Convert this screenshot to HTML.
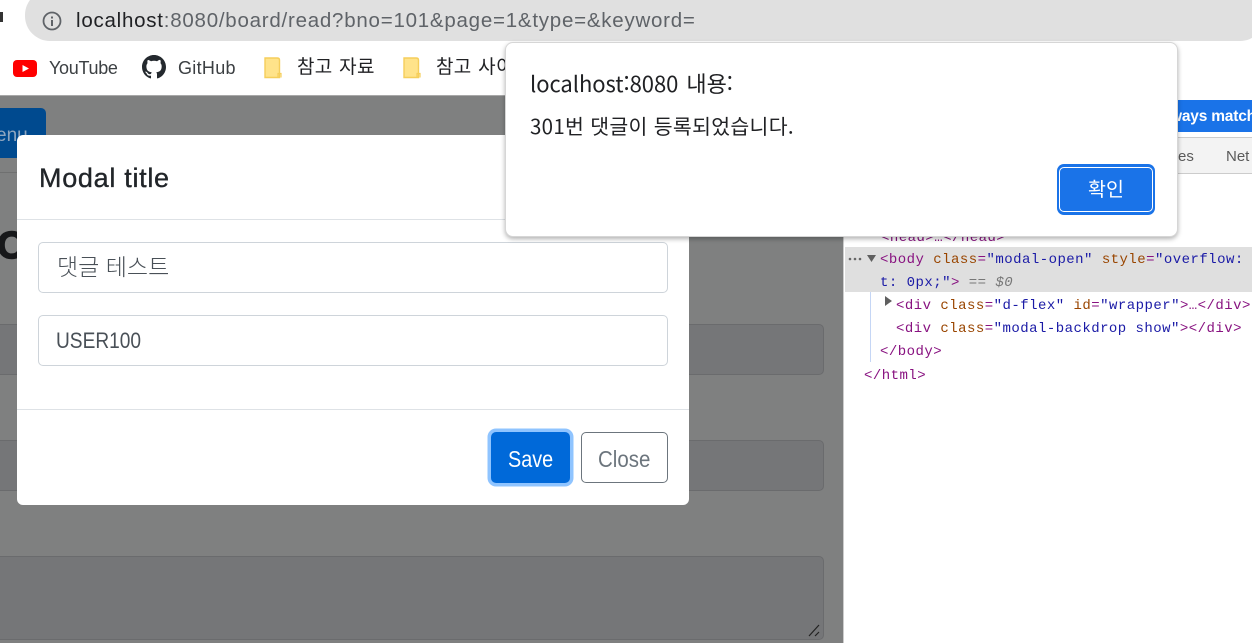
<!DOCTYPE html>
<html lang="ko">
<head>
<meta charset="utf-8">
<title>Modal</title>
<style>
html,body{margin:0;padding:0;width:1252px;height:643px;overflow:hidden;background:#fff}
body{position:relative;font-family:"Liberation Sans","Noto Sans CJK KR",sans-serif;}
.a{position:absolute;box-sizing:border-box}
.t{position:absolute;white-space:pre;line-height:1}
.k{font-family:"Noto Sans CJK KR","Liberation Sans",sans-serif;font-weight:300}
.m{font-family:"Liberation Mono","DejaVu Sans Mono",monospace;font-size:14px;letter-spacing:.47px}
.tag{color:#881280}.an{color:#994500}.av{color:#1a1aa6}
</style>
</head>
<body>
<!-- backdrop -->
<div class="a" style="left:0;top:95px;width:843px;height:548px;background:#7f8080;border-top:1px solid #a8a8a8"></div>
<div class="a" style="left:0;top:108px;width:46px;height:50px;background:#004a8f;border-radius:0 5px 5px 0"></div>
<div class="t" style="left:-4px;top:126px;font-size:19px;color:#8fa6bf">enu</div>
<div class="a" style="left:0;top:172px;width:17px;height:1px;background:#6f7070"></div>
<div class="t" style="left:-3px;top:227px;font-size:38px;font-weight:bold;color:#17181a;-webkit-text-stroke:1.5px #17181a">O</div>
<div class="a" style="left:-6px;top:324px;width:830px;height:51px;background:#757678;border:1px solid #6a6b6d;border-radius:5px"></div>
<div class="a" style="left:-6px;top:440px;width:830px;height:51px;background:#757678;border:1px solid #6a6b6d;border-radius:5px"></div>
<div class="a" style="left:-6px;top:556px;width:830px;height:84px;background:#757678;border:1px solid #6a6b6d;border-radius:5px"></div>
<svg class="a" style="left:806px;top:622px" width="18" height="16"><path d="M3 14 L13 3 M9 14 L13 10" stroke="#222" stroke-width="1.2" fill="none"/></svg>

<!-- modal -->
<div class="a" style="left:17px;top:135px;width:672px;height:370px;background:#fff;border-radius:6px"></div>
<div class="t" style="left:39px;top:165px;font-size:27px;color:#212529;letter-spacing:.7px;-webkit-text-stroke:.35px #212529">Modal title</div>
<div class="a" style="left:17px;top:219px;width:672px;height:1px;background:#dee2e6"></div>
<div class="a" style="left:38px;top:242px;width:630px;height:51px;border:1px solid #ced4da;border-radius:5px"></div>
<div class="t k" style="left:57px;top:254px;font-size:23px;color:#495057">댓글 테스트</div>
<div class="a" style="left:38px;top:315px;width:630px;height:51px;border:1px solid #ced4da;border-radius:5px"></div>
<div class="t" style="left:56px;top:330px;font-size:22.5px;color:#495057;transform:scaleX(.85);transform-origin:left">USER100</div>
<div class="a" style="left:17px;top:409px;width:672px;height:1px;background:#dee2e6"></div>
<div class="a" style="left:491px;top:432px;width:79px;height:51px;background:#0069d9;border-radius:5px;box-shadow:0 0 0 3.5px #8fc4ff"></div>
<div class="t" style="left:508px;top:448px;font-size:23px;color:#fff;transform:scaleX(.86);transform-origin:left">Save</div>
<div class="a" style="left:581px;top:432px;width:87px;height:51px;border:1px solid #6c757d;border-radius:5px;background:#fff"></div>
<div class="t" style="left:598px;top:448px;font-size:23px;color:#6c757d;transform:scaleX(.89);transform-origin:left">Close</div>

<!-- devtools -->
<div class="a" style="left:843px;top:96px;width:409px;height:547px;background:#fff;border-left:1px solid #ccc"></div>
<div class="a" style="left:1170px;top:100px;width:82px;height:32px;background:#1a73e8"></div>
<div class="t" style="left:1170px;top:109px;font-size:15.5px;font-weight:bold;color:#fff;letter-spacing:-.2px">ways match</div>
<div class="a" style="left:844px;top:137px;width:408px;height:37px;background:#f3f3f3;border-top:1px solid #ccc;border-bottom:1px solid #ccc"></div>
<div class="t" style="left:1178px;top:149px;font-size:15px;color:#5a5a5a">es</div>
<div class="t" style="left:1226px;top:149px;font-size:15px;color:#5a5a5a">Net</div>
<div class="t m" style="left:881px;top:231px"><span class="tag">&lt;head&gt;…&lt;/head&gt;</span></div>
<div class="a" style="left:845px;top:247px;width:407px;height:45px;background:#dfdfdf"></div>
<svg class="a" style="left:848px;top:255px" width="32" height="12"><g fill="#666"><circle cx="2" cy="4" r="1.3"/><circle cx="7" cy="4" r="1.3"/><circle cx="12" cy="4" r="1.3"/></g><path d="M19 0 H28 L23.5 7 Z" fill="#5f5f5f"/></svg>
<div class="t m" style="left:880px;top:253px"><span class="tag">&lt;body</span> <span class="an">class</span><span class="tag">=</span><span class="av">"modal-open"</span> <span class="an">style</span><span class="tag">=</span><span class="av">"overflow:</span></div>
<div class="t m" style="left:880px;top:276px"><span class="av">t: 0px;"</span><span class="tag">&gt;</span> <span style="color:#777">==</span> <i style="color:#777">$0</i></div>
<div class="a" style="left:870px;top:292px;width:1px;height:70px;background:#c5d6f5"></div>
<svg class="a" style="left:885px;top:296px" width="8" height="11"><path d="M0 0 L7 5 L0 10 Z" fill="#5f5f5f"/></svg>
<div class="t m" style="left:896px;top:299px"><span class="tag">&lt;div</span> <span class="an">class</span><span class="tag">=</span><span class="av">"d-flex"</span> <span class="an">id</span><span class="tag">=</span><span class="av">"wrapper"</span><span class="tag">&gt;…&lt;/div&gt;</span></div>
<div class="t m" style="left:896px;top:322px"><span class="tag">&lt;div</span> <span class="an">class</span><span class="tag">=</span><span class="av">"modal-backdrop show"</span><span class="tag">&gt;&lt;/div&gt;</span></div>
<div class="t m" style="left:880px;top:345px"><span class="tag">&lt;/body&gt;</span></div>
<div class="t m" style="left:864px;top:369px"><span class="tag">&lt;/html&gt;</span></div>

<!-- browser chrome -->
<div class="a" style="left:0;top:0;width:1252px;height:41px;background:#fff"></div>
<div class="a" style="left:25px;top:-10px;width:1240px;height:51px;background:#e0e0e0;border-radius:25px"></div>
<div class="a" style="left:0;top:12px;width:3px;height:10px;background:#333"></div>
<svg class="a" style="left:42px;top:11px" width="20" height="20" viewBox="0 0 20 20"><circle cx="10" cy="10" r="8.5" fill="none" stroke="#5f6368" stroke-width="1.8"/><rect x="9" y="9" width="2" height="6" fill="#5f6368"/><rect x="9" y="5.5" width="2" height="2" fill="#5f6368"/></svg>
<div class="t" style="left:76px;top:11px;font-size:20.5px;color:#5f6368;letter-spacing:.76px"><span style="color:#202124">localhost</span>:8080/board/read?bno=101&amp;page=1&amp;type=&amp;keyword=</div>

<!-- bookmarks -->
<svg class="a" style="left:13px;top:60px" width="24" height="17" viewBox="0 0 24 17"><rect width="24" height="17" rx="4" fill="#f00"/><path d="M9.5 5 L16 8.5 L9.5 12 Z" fill="#fff"/></svg>
<div class="t" style="left:49px;top:59px;font-size:18px;color:#3c4043;letter-spacing:-.3px">YouTube</div>
<svg class="a" style="left:142px;top:55px" width="24" height="24" viewBox="0 0 16 16"><path fill="#24292e" d="M8 0C3.58 0 0 3.58 0 8c0 3.54 2.29 6.53 5.47 7.59.4.07.55-.17.55-.38 0-.19-.01-.82-.01-1.49-2.01.37-2.53-.49-2.69-.94-.09-.23-.48-.94-.82-1.13-.28-.15-.68-.52-.01-.53.63-.01 1.08.58 1.23.82.72 1.21 1.87.87 2.33.66.07-.52.28-.87.51-1.07-1.78-.2-3.64-.89-3.64-3.95 0-.87.31-1.59.82-2.15-.08-.2-.36-1.02.08-2.12 0 0 .67-.21 2.2.82.64-.18 1.32-.27 2-.27s1.36.09 2 .27c1.53-1.04 2.2-.82 2.2-.82.44 1.1.16 1.92.08 2.12.51.56.82 1.27.82 2.15 0 3.07-1.87 3.75-3.65 3.95.29.25.54.73.54 1.48 0 1.07-.01 1.93-.01 2.2 0 .21.15.46.55.38A8.01 8.01 0 0 0 16 8c0-4.42-3.58-8-8-8z"/></svg>
<div class="t" style="left:178px;top:59px;font-size:18px;color:#3c4043;letter-spacing:.3px">GitHub</div>
<svg class="a" style="left:264px;top:57px" width="18" height="22" viewBox="0 0 18 22"><path d="M1 1 H13 Q15.5 1 15.5 3 V20.5 H1 Z" fill="#ffe38a" stroke="#f5ce5b" stroke-width="1.4"/><path d="M14 20.5 V16.5 H17 V20.5" fill="none" stroke="#f5ce5b" stroke-width="1.2"/></svg>
<div class="t k" style="left:297px;top:56px;font-size:19px;color:#202124;font-weight:400;letter-spacing:.3px;word-spacing:1px">참고 자료</div>
<svg class="a" style="left:403px;top:57px" width="18" height="22" viewBox="0 0 18 22"><path d="M1 1 H13 Q15.5 1 15.5 3 V20.5 H1 Z" fill="#ffe38a" stroke="#f5ce5b" stroke-width="1.4"/><path d="M14 20.5 V16.5 H17 V20.5" fill="none" stroke="#f5ce5b" stroke-width="1.2"/></svg>
<div class="t k" style="left:436px;top:56px;font-size:19px;color:#202124;font-weight:400;letter-spacing:.3px;word-spacing:1px">참고 사이트</div>

<!-- alert -->
<div class="a" style="left:505px;top:42px;width:673px;height:195px;background:#fff;border:1px solid #d6d6d6;border-radius:8px;box-shadow:0 2px 5px rgba(0,0,0,.3)"></div>
<div class="t k" style="left:530px;top:72px;font-size:22px;color:#202124;font-weight:400;letter-spacing:-.05px;word-spacing:2px">localhost:8080 내용:</div>
<div class="t k" style="left:530px;top:115px;font-size:20.5px;color:#202124;font-weight:400;letter-spacing:.3px">301번 댓글이 등록되었습니다.</div>
<div class="a" style="left:1057px;top:164px;width:98px;height:51px;background:#1a73e8;border-radius:7px"></div>
<div class="a" style="left:1059px;top:167px;width:94px;height:45px;border:1.5px solid #fff;border-radius:5px"></div>
<div class="t k" style="left:1088px;top:178px;font-size:19.5px;color:#fff;font-weight:400">확인</div>
</body>
</html>
